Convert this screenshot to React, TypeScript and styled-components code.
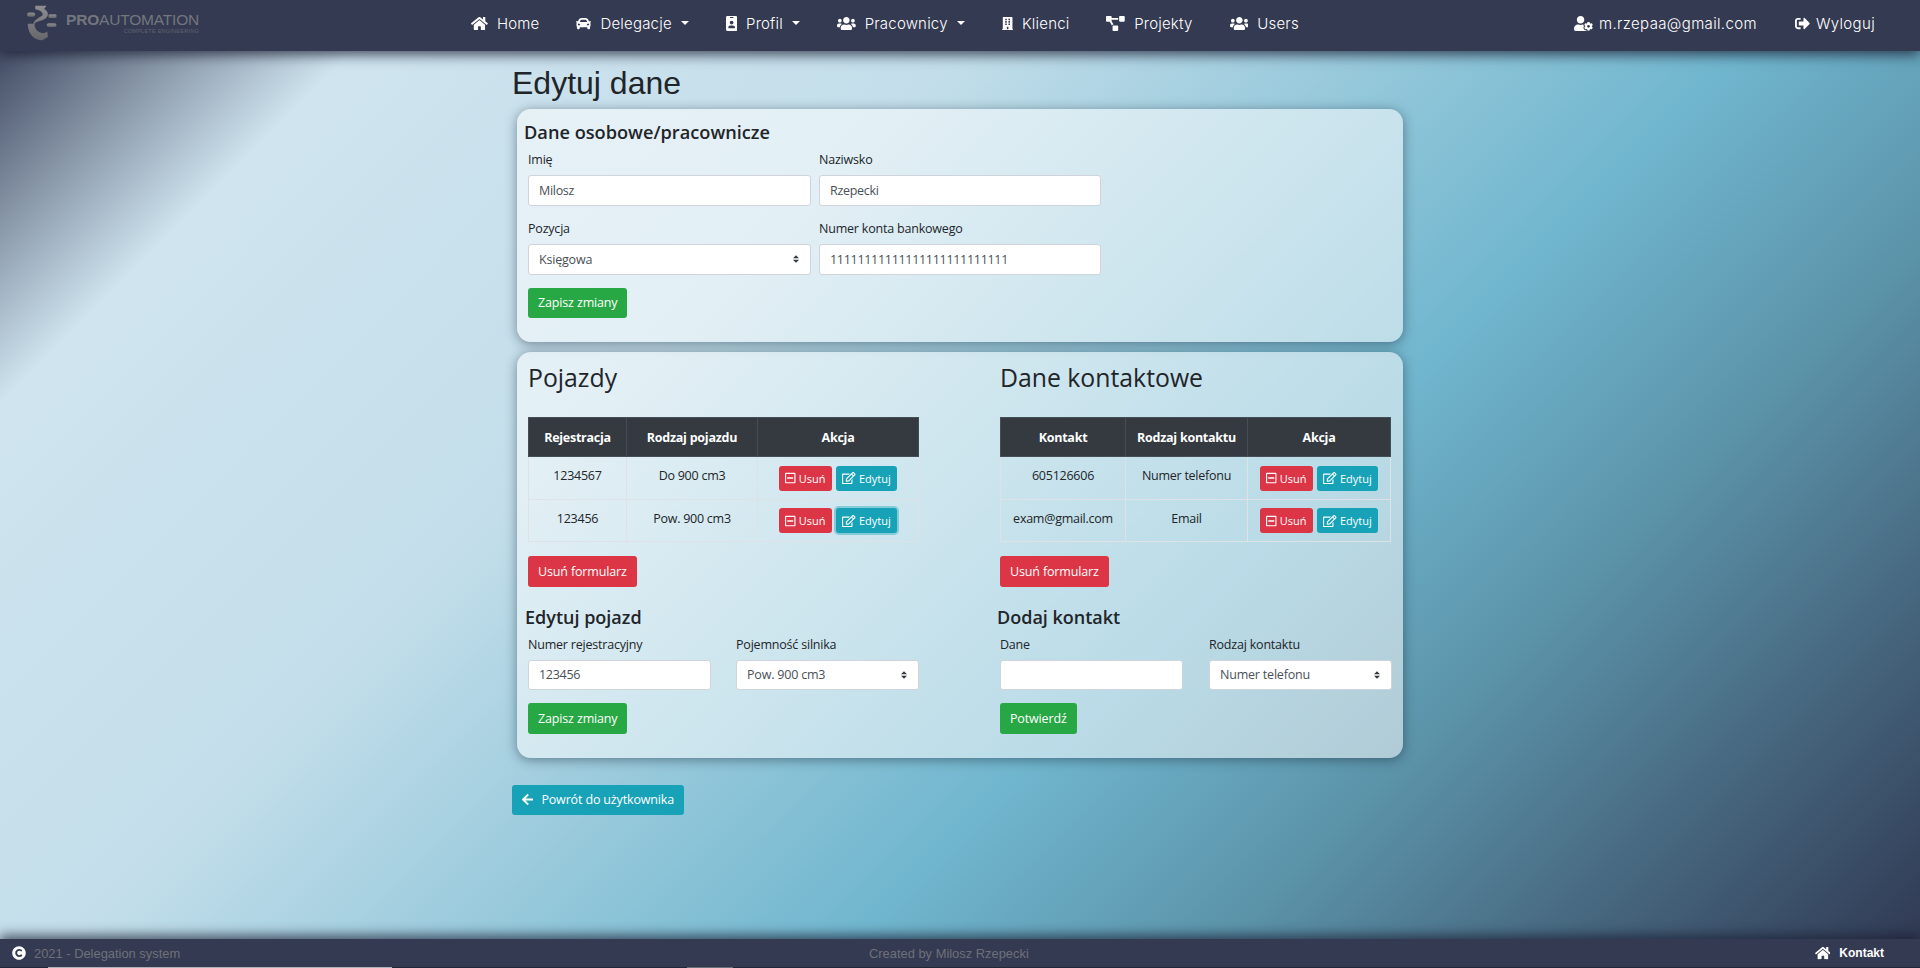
import React from "react";
import styled, { createGlobalStyle } from "styled-components";
import {
  FaHome,
  FaCar,
  FaIdBadge,
  FaUsers,
  FaBuilding,
  FaProjectDiagram,
  FaUserCog,
  FaSignOutAlt,
  FaRegMinusSquare,
  FaRegEdit,
  FaArrowLeft,
  FaCopyright,
} from "react-icons/fa";

const GlobalStyle = createGlobalStyle`
  * { box-sizing: border-box; }
  html, body { margin: 0; padding: 0; }
  body {
    font-family: "Open Sans", "Noto Sans", sans-serif;
    font-size: 12.5px;
    letter-spacing: -0.2px;
    color: #212529;
  }
`;

// react-icons forces a 1em square, these restore the real glyph widths
const HomeIcon = styled(FaHome)`width: 1.125em;`;
const BadgeIcon = styled(FaIdBadge)`width: 0.75em;`;
const UsersIcon = styled(FaUsers)`width: 1.25em;`;
const BuildingIcon = styled(FaBuilding)`width: 0.75em;`;
const DiagramIcon = styled(FaProjectDiagram)`width: 1.25em;`;
const UserCogIcon = styled(FaUserCog)`width: 1.25em;`;
const MinusIcon = styled(FaRegMinusSquare)`width: 0.875em;`;
const EditIcon = styled(FaRegEdit)`width: 1.125em;`;
const ArrowIcon = styled(FaArrowLeft)`width: 0.875em;`;

const Page = styled.div`
  height: 968px;
  overflow: hidden;
  display: flex;
  flex-direction: column;
  background: linear-gradient(135deg, #2f3650 0%, #cfe4ef 14%, #c3deea 35%, #70b6ce 62%, #5b93a9 75%, #2f3650 100%);
`;

const Navbar = styled.nav`
  height: 51px;
  flex: none;
  display: flex;
  align-items: center;
  background: #343a52;
  box-shadow: 0 4px 12px rgba(25, 30, 50, 0.75);
  color: #fff;
  font-family: Inter, "Open Sans", sans-serif;
  font-size: 15px;
  font-weight: 300;
  padding: 0 45px 5px 27px;
  position: relative;
  z-index: 1;
`;

const Logo = styled.div`
  width: 172px;
  display: flex;
  align-items: center;
  gap: 9px;
  color: #74767d;
`;

const LogoText = styled.div`
  display: flex;
  flex-direction: column;
  align-items: flex-end;
  font-family: "Liberation Sans", sans-serif;
  font-size: 15.5px;
  line-height: 15px;
  letter-spacing: -0.2px;
  white-space: nowrap;
  b { font-weight: 700; }
  small {
    font-size: 5.6px;
    line-height: 8px;
    letter-spacing: 0.2px;
    color: #60636f;
  }
`;

const NavLinks = styled.div`
  margin-left: 272px;
  display: flex;
  align-items: center;
  gap: 37px;
  letter-spacing: 0.2px;
`;

const NavLink = styled.a<{ $tight?: boolean }>`
  display: flex;
  align-items: center;
  gap: ${(p) => (p.$tight ? 6 : 9)}px;
  white-space: nowrap;
  svg { font-size: 15px; flex: none; }
`;

const Caret = styled.span`
  width: 0;
  height: 0;
  border-left: 4.5px solid transparent;
  border-right: 4.5px solid transparent;
  border-top: 4.5px solid #fff;
`;

const NavRight = styled.div`
  margin-left: auto;
  display: flex;
  align-items: center;
  gap: 38px;
  letter-spacing: 0.35px;
`;

const Main = styled.main`
  flex: 1;
  width: 896px;
  margin-left: 512px;
`;

const Title = styled.h1`
  margin: 13px 0 7px;
  font-family: "Liberation Sans", sans-serif;
  font-size: 32px;
  line-height: 38px;
  font-weight: 400;
  letter-spacing: 0;
`;

const Card = styled.section`
  margin-left: 5px;
  width: 886px;
  margin-bottom: 10px;
  border-radius: 14px;
  background: rgba(255, 255, 255, 0.52);
  box-shadow: 0 2px 12px rgba(25, 45, 60, 0.5);
  padding: 11px;
`;

const FormTitle = styled.h5`
  margin: 0 0 7px -4px;
  font-size: 18.2px;
  line-height: 24px;
  font-weight: 600;
  letter-spacing: 0;
`;

const FieldGrid = styled.div<{ $cols: string; $gap: number }>`
  display: grid;
  grid-template-columns: ${(p) => p.$cols};
  column-gap: ${(p) => p.$gap}px;
  row-gap: 14.5px;
`;

const Field = styled.label`
  display: flex;
  flex-direction: column;
  line-height: 17px;
  gap: 7px;
`;

const Input = styled.input`
  height: 30.5px;
  width: 100%;
  padding: 0 10px;
  font: inherit;
  letter-spacing: -0.3px;
  color: #495057;
  background: #fff;
  border: 1px solid #ced4da;
  border-radius: 3px;
`;

const Select = styled.select`
  height: 30.5px;
  width: 100%;
  padding: 0 10px;
  font: inherit;
  letter-spacing: -0.2px;
  color: #495057;
  appearance: none;
  background: #fff url("data:image/svg+xml,%3csvg xmlns='http://www.w3.org/2000/svg' width='4' height='5' viewBox='0 0 4 5'%3e%3cpath fill='%23343a40' d='M2 0L0 2h4zm0 5L0 3h4z'/%3e%3c/svg%3e") no-repeat right 11px center / 6px 8px;
  border: 1px solid #ced4da;
  border-radius: 3px;
`;

const Button = styled.button<{ $variant: "success" | "danger" | "info"; $small?: boolean; $focused?: boolean }>`
  display: inline-flex;
  align-items: center;
  justify-content: center;
  font-family: inherit;
  white-space: nowrap;
  color: #fff;
  border: 0;
  border-radius: 3px;
  background: ${(p) => (p.$variant === "success" ? "#28a745" : p.$variant === "danger" ? "#dc3545" : "#17a2b8")};
  height: ${(p) => (p.$small ? 25 : 30.5)}px;
  font-size: ${(p) => (p.$small ? 11 : 12.5)}px;
  letter-spacing: ${(p) => (p.$small ? 0 : -0.15)}px;
  padding: 0 ${(p) => (p.$small ? 6.5 : 10)}px;
  gap: ${(p) => (p.$small ? 3 : 8)}px;
  box-shadow: ${(p) => (p.$focused ? "0 0 0 2px rgba(58, 176, 195, 0.5)" : "none")};
  svg { flex: none; font-size: ${(p) => (p.$small ? 12 : 13)}px; }
`;

const SaveRow = styled.div`
  margin-top: 13px;
  padding-bottom: 13px;
`;

const Columns = styled.div`
  display: grid;
  grid-template-columns: 391px 391px;
  column-gap: 81px;
`;

const Heading = styled.h3`
  margin: 0 0 25px;
  font-size: 24.8px;
  line-height: 29px;
  font-weight: 500;
  letter-spacing: 0;
`;

const Table = styled.table`
  width: 100%;
  table-layout: fixed;
  border-collapse: collapse;
  letter-spacing: -0.25px;
  text-align: center;
  margin-bottom: 14px;
`;

const Th = styled.th`
  height: 39px;
  padding: 0;
  color: #fff;
  font-weight: 700;
  background: #343a40;
  border: 1px solid #454d55;
`;

const Td = styled.td`
  height: 42.5px;
  padding: 0 0 4px;
  border: 1px solid #dee2e6;
`;

const Actions = styled.div`
  display: flex;
  justify-content: center;
  gap: 4px;
  padding-top: 5px;
`;

const SubTitle = styled(FormTitle)`
  margin: 18px 0 7px -3px;
  font-size: 18px;
`;

const BackWrap = styled.div`
  margin-top: 27px;
`;

const Footer = styled.footer`
  height: 28px;
  flex: none;
  display: flex;
  align-items: center;
  background: #343a52;
  box-shadow: 0 -4px 12px rgba(25, 30, 50, 0.7);
  font-family: "Liberation Sans", sans-serif;
  font-size: 12.9px;
  letter-spacing: 0;
  color: #6f7179;
  padding: 0 36px 0 12px;
  position: relative;
`;

const Copy = styled.div`
  display: flex;
  align-items: center;
  gap: 8px;
  width: 857px;
  svg { color: #fff; font-size: 14px; }
`;

const Contact = styled.div`
  margin-left: auto;
  display: flex;
  align-items: center;
  gap: 9px;
  color: #fff;
  font-weight: 700;
  font-size: 12px;
  svg { font-size: 14px; }
`;

const BottomStrip = styled.div`
  height: 1px;
  flex: none;
  display: flex;
  background: #232a3a;
`;

const StripPiece = styled.span<{ $left: number; $width: number; $color: string }>`
  margin-left: ${(p) => p.$left}px;
  width: ${(p) => p.$width}px;
  background: ${(p) => p.$color};
`;

const RowActions = ({ focused }: { focused?: boolean }) => (
  <Actions>
    <Button $variant="danger" $small>
      <MinusIcon /> Usuń
    </Button>
    <Button $variant="info" $small $focused={focused}>
      <EditIcon /> Edytuj
    </Button>
  </Actions>
);

const App: React.FC = () => {
  return (
    <Page>
      <GlobalStyle />
      <Navbar>
        <Logo>
          <svg width="31" height="38" viewBox="0 0 95 115">
            <defs>
              <linearGradient id="logoGrey" x1="0" y1="0" x2="0" y2="1">
                <stop offset="0" stopColor="#8e8e90" />
                <stop offset="1" stopColor="#66676c" />
              </linearGradient>
            </defs>
            <g fill="url(#logoGrey)">
              <path d="M26 3 H62 L54 13 C68 20 72 36 54 46 C44 52 30 52 24 60 C22 76 36 90 54 90 L64 84 L66 102 L48 112 C24 112 4 96 2 60 H20 C24 46 40 40 48 34 C54 28 44 16 26 14 Z" />
              <rect x="0" y="24" width="26" height="14" rx="7" />
              <rect x="68" y="30" width="25" height="12" rx="4" />
              <rect x="62" y="58" width="31" height="12" rx="6" />
            </g>
          </svg>
          <LogoText>
            <span>
              <b>PRO</b>AUTOMATION
            </span>
            <small>COMPLETE ENGINEERING</small>
          </LogoText>
        </Logo>
        <NavLinks>
          <NavLink>
            <HomeIcon /> Home
          </NavLink>
          <NavLink>
            <FaCar /> Delegacje <Caret />
          </NavLink>
          <NavLink>
            <BadgeIcon /> Profil <Caret />
          </NavLink>
          <NavLink>
            <UsersIcon /> Pracownicy <Caret />
          </NavLink>
          <NavLink>
            <BuildingIcon /> Klienci
          </NavLink>
          <NavLink>
            <DiagramIcon /> Projekty
          </NavLink>
          <NavLink>
            <UsersIcon /> Users
          </NavLink>
        </NavLinks>
        <NavRight>
          <NavLink $tight>
            <UserCogIcon /> m.rzepaa@gmail.com
          </NavLink>
          <NavLink $tight>
            <FaSignOutAlt /> Wyloguj
          </NavLink>
        </NavRight>
      </Navbar>

      <Main>
        <Title>Edytuj dane</Title>
        <Card>
          <FormTitle>Dane osobowe/pracownicze</FormTitle>
          <FieldGrid $cols="283px 282px" $gap={8}>
            <Field>
              Imię
              <Input defaultValue="Milosz" />
            </Field>
            <Field>
              Naziwsko
              <Input defaultValue="Rzepecki" />
            </Field>
            <Field>
              Pozycja
              <Select defaultValue="Księgowa">
                <option>Księgowa</option>
              </Select>
            </Field>
            <Field>
              Numer konta bankowego
              <Input defaultValue="11111111111111111111111111" />
            </Field>
          </FieldGrid>
          <SaveRow>
            <Button $variant="success">Zapisz zmiany</Button>
          </SaveRow>
        </Card>

        <Card>
          <Columns>
            <div>
              <Heading>Pojazdy</Heading>
              <Table>
                <colgroup>
                  <col style={{ width: 98 }} />
                  <col style={{ width: 131 }} />
                  <col />
                </colgroup>
                <thead>
                  <tr>
                    <Th>Rejestracja</Th>
                    <Th>Rodzaj pojazdu</Th>
                    <Th>Akcja</Th>
                  </tr>
                </thead>
                <tbody>
                  <tr>
                    <Td>1234567</Td>
                    <Td>Do 900 cm3</Td>
                    <Td>
                      <RowActions />
                    </Td>
                  </tr>
                  <tr>
                    <Td>123456</Td>
                    <Td>Pow. 900 cm3</Td>
                    <Td>
                      <RowActions focused />
                    </Td>
                  </tr>
                </tbody>
              </Table>
              <Button $variant="danger">Usuń formularz</Button>
              <SubTitle>Edytuj pojazd</SubTitle>
              <FieldGrid $cols="183px 183px" $gap={25}>
                <Field>
                  Numer rejestracyjny
                  <Input defaultValue="123456" />
                </Field>
                <Field>
                  Pojemność silnika
                  <Select defaultValue="Pow. 900 cm3">
                    <option>Pow. 900 cm3</option>
                  </Select>
                </Field>
              </FieldGrid>
              <SaveRow>
                <Button $variant="success">Zapisz zmiany</Button>
              </SaveRow>
            </div>
            <div>
              <Heading>Dane kontaktowe</Heading>
              <Table>
                <colgroup>
                  <col style={{ width: 125 }} />
                  <col style={{ width: 122 }} />
                  <col />
                </colgroup>
                <thead>
                  <tr>
                    <Th>Kontakt</Th>
                    <Th>Rodzaj kontaktu</Th>
                    <Th>Akcja</Th>
                  </tr>
                </thead>
                <tbody>
                  <tr>
                    <Td>605126606</Td>
                    <Td>Numer telefonu</Td>
                    <Td>
                      <RowActions />
                    </Td>
                  </tr>
                  <tr>
                    <Td>exam@gmail.com</Td>
                    <Td>Email</Td>
                    <Td>
                      <RowActions />
                    </Td>
                  </tr>
                </tbody>
              </Table>
              <Button $variant="danger">Usuń formularz</Button>
              <SubTitle>Dodaj kontakt</SubTitle>
              <FieldGrid $cols="183px 183px" $gap={26}>
                <Field>
                  Dane
                  <Input />
                </Field>
                <Field>
                  Rodzaj kontaktu
                  <Select defaultValue="Numer telefonu">
                    <option>Numer telefonu</option>
                  </Select>
                </Field>
              </FieldGrid>
              <SaveRow>
                <Button $variant="success">Potwierdź</Button>
              </SaveRow>
            </div>
          </Columns>
        </Card>

        <BackWrap>
          <Button $variant="info">
            <ArrowIcon /> Powrót do użytkownika
          </Button>
        </BackWrap>
      </Main>

      <Footer>
        <Copy>
          <FaCopyright /> 2021 - Delegation system
        </Copy>
        <span>Created by Milosz Rzepecki</span>
        <Contact>
          <HomeIcon /> Kontakt
        </Contact>
      </Footer>
      <BottomStrip>
        <StripPiece $left={48} $width={344} $color="#c9ccd2" />
        <StripPiece $left={295} $width={46} $color="#7b7f88" />
      </BottomStrip>
    </Page>
  );
};

export default App;
